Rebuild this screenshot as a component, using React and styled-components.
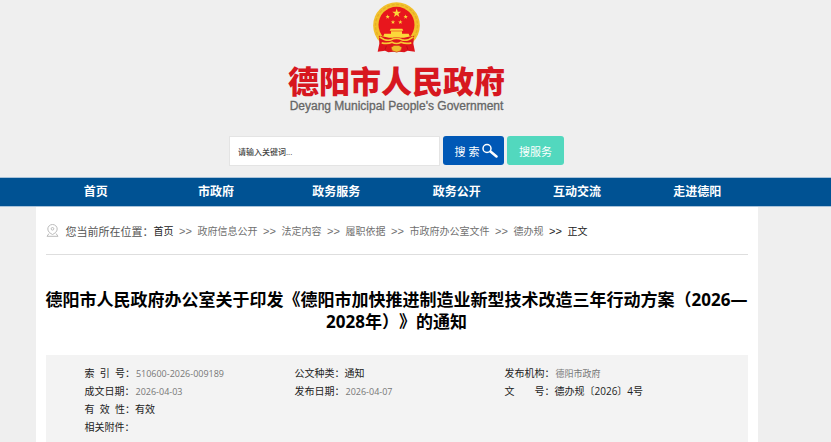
import React from "react";
import styled, { createGlobalStyle } from "styled-components";

const GlobalStyle = createGlobalStyle`
  * {
    box-sizing: border-box;
  }

  body {
    margin: 0;
    background: #efefef;
    color: #333;
    font-family: "Open Sans", "Noto Sans CJK SC", sans-serif;
    font-size: 10px;
    text-spacing-trim: space-all;
  }

  a {
    color: inherit;
    text-decoration: none;
  }
`;

const Page = styled.div`
  min-height: 100vh;
  display: flex;
  flex-direction: column;
`;

const Band = styled.div`
  padding: 0 38px 0 0;
`;

const Container = styled.div`
  max-width: 722px;
  margin: 0 auto;
`;

const Header = styled(Container)`
  display: flex;
  flex-direction: column;
  align-items: center;
  padding: 2px 0 11px;
`;

const Brand = styled.a`
  display: flex;
  flex-direction: column;
  align-items: center;
`;

const SiteName = styled.span`
  margin-top: 14px;
  color: #d7171f;
  font-family: "Liberation Sans", "Noto Sans CJK SC", sans-serif;
  font-size: 31px;
  font-weight: 900;
  line-height: 32px;
`;

const SiteNameEn = styled.span`
  color: #666;
  font-family: "Liberation Sans", sans-serif;
  font-size: 12px;
  font-weight: 400;
  -webkit-text-stroke: 0.3px #666;
  line-height: 14px;
`;

const SearchForm = styled.form`
  display: flex;
  gap: 3px;
  margin-top: 23px;
`;

const SearchInput = styled.input`
  width: 211px;
  height: 30px;
  padding: 0 8px;
  border: 1px solid #e4e4e4;
  background: #fff;
  color: #555;
  font: 500 8px "Open Sans", "Noto Sans CJK SC", sans-serif;

  &::placeholder {
    color: #444;
    opacity: 1;
  }
`;

const SearchButton = styled.button`
  display: flex;
  align-items: center;
  justify-content: center;
  gap: 3px;
  width: ${(props) => (props.$wide ? 61 : 57)}px;
  height: 29px;
  padding: ${(props) => (props.$wide ? "0 0 0 6px" : 0)};
  border: 0;
  border-radius: 3px;
  background: ${(props) => (props.$wide ? "#0058b6" : "#52d8be")};
  color: #fff;
  font: 11px "Open Sans", "Noto Sans CJK SC", sans-serif;
  cursor: pointer;
`;

const NavBand = styled(Band)`
  border: solid #a9c3da;
  border-width: 1px 0;
  background: #005293;
`;

const Nav = styled(Container).attrs({ as: "nav" })`
  display: grid;
  grid-template-columns: repeat(6, 1fr);
`;

const NavLink = styled.a`
  color: #fff;
  font-size: 12px;
  font-weight: 700;
  line-height: 28px;
  text-align: center;
`;

const MainBand = styled(Band)`
  flex: 1;
  display: flex;
  flex-direction: column;
`;

const Main = styled(Container).attrs({ as: "main" })`
  flex: 1;
  width: 100%;
  padding: 0 10px;
  background: #fff;
`;

const Breadcrumb = styled.nav`
  display: flex;
  align-items: center;
  height: 48px;
  border-bottom: 1px solid #dedede;
  color: #666;
`;

const BreadcrumbLabel = styled.span`
  margin-left: 7px;
  color: #555;
  font-size: 11px;
`;

const Crumb = styled.a`
  color: ${(props) => (props.$dark ? "#222" : "#707070")};
`;

const Separator = styled.span`
  width: 24px;
  color: ${(props) => (props.$dark ? "#222" : "#707070")};
  font-family: "Liberation Sans", sans-serif;
  font-size: 11px;
  text-align: center;
`;

const Title = styled.h1`
  margin: 34px 0 22px;
  color: #000;
  font-size: 17px;
  font-weight: 700;
  line-height: 22px;
  text-align: center;
`;

const InfoPanel = styled.div`
  padding: 9px 33px 12px 39px;
  background: #f3f3f3;
`;

const InfoTable = styled.table`
  width: 100%;
  border-collapse: collapse;
  table-layout: fixed;
`;

const InfoCell = styled.td`
  height: 18px;
  padding: 0;
  color: #222;
  line-height: 18px;
  white-space: nowrap;
`;

const InfoValue = styled.span`
  margin-left: ${(props) => (props.$muted ? 1 : 0)}px;
  color: ${(props) => (props.$muted ? "#777" : "#222")};
  font-size: ${(props) => (props.$muted ? 9 : 10)}px;
  line-height: 1;
`;

const navItems = [
  "首页",
  "市政府",
  "政务服务",
  "政务公开",
  "互动交流",
  "走进德阳",
];

const crumbs = [
  "首页",
  "政府信息公开",
  "法定内容",
  "履职依据",
  "市政府办公室文件",
  "德办规",
  "正文",
];

const infoRows = [
  [
    {
      label: "索\u00a0\u00a0引\u00a0\u00a0号：",
      value: "510600-2026-009189",
      muted: true,
    },
    { label: "公文种类：", value: "通知" },
    { label: "发布机构：", value: "德阳市政府", muted: true },
  ],
  [
    { label: "成文日期：", value: "2026-04-03", muted: true },
    { label: "发布日期：", value: "2026-04-07", muted: true },
    { label: "文\u3000\u3000号：", value: "德办规〔2026〕4号" },
  ],
  [{ label: "有\u00a0\u00a0效\u00a0\u00a0性：", value: "有效" }],
  [{ label: "相关附件：", value: "" }],
];

const STAR =
  "M0-10 2.3-3.1 9.5-3.1 3.7 1.2 5.9 8.1 0 3.8-5.9 8.1-3.7 1.2-9.5-3.1-2.3-3.1z";

const Emblem = () => (
  <svg width="47" height="51" viewBox="0 0 141 152" aria-hidden="true">
    <circle cx="70.5" cy="70" r="70" fill="#f2c12c" />
    <circle
      cx="70.5"
      cy="70"
      r="63"
      fill="none"
      stroke="#e6ae27"
      strokeWidth="4"
      strokeDasharray="9 5"
    />
    <circle cx="70.5" cy="68" r="54" fill="#e8161d" />
    <g fill="#fbd83a">
      <path d={STAR} transform="translate(71 33) scale(1.4)" />
      <path d={STAR} transform="translate(44 44) scale(.7)" />
      <path d={STAR} transform="translate(98 44) scale(.7)" />
      <path d={STAR} transform="translate(60 60) scale(.7)" />
      <path d={STAR} transform="translate(82 60) scale(.7)" />
      <path d="M53 80h35l3 6H50zM54 87h33v8H54zM34 95h73l5 12H29z" />
    </g>
    <path
      d="M18 101q22 3 35 8 17-6 35 0 13-5 35-8l-2 24 5 24-22-3-10 4-24-2-24 2-10-4-22 3 5-24z"
      fill="#dd141c"
    />
    <path
      d="M20 104q18 14 34 9 16-8 33 0 16 5 34-9M26 122q18 4 31-2 14 8 27 0 15 6 31 2"
      fill="none"
      stroke="#f7c832"
      strokeWidth="5"
    />
    <path
      d="m54 136 9-6h15l9 6-4 10-12 4-13-4z"
      fill="#eebb2d"
      stroke="#cf3b1d"
      strokeWidth="2"
    />
    <path d="M40 131 36 143M101 131l4 12" stroke="#a90c13" strokeWidth="2" />
  </svg>
);

const SearchIcon = () => (
  <svg width="16" height="15" viewBox="0 0 16 15" aria-hidden="true">
    <circle
      cx="5"
      cy="5.5"
      r="4"
      fill="none"
      stroke="#fff"
      strokeWidth="1.5"
    />
    <path
      d="m8.5 8.5 6 5"
      stroke="#fff"
      strokeWidth="2.5"
      strokeLinecap="round"
    />
  </svg>
);

const PinIcon = () => (
  <svg
    width="13"
    height="13"
    viewBox="0 0 13 13"
    fill="none"
    stroke="#bbb"
    aria-hidden="true"
  >
    <path d="M6.5 10.5C4.5 9.5 1.8 7.8 1.8 5a4.7 4.5 0 0 1 9.4 0c0 2.8-2.7 4.5-4.7 5.5z" />
    <circle cx="6.5" cy="4.8" r="1.3" />
    <path d="M3 9.5 1 12.3h11L10 9.5" />
  </svg>
);

const App = () => {
  return (
    <>
      <GlobalStyle />
      <Page>
        <Band>
          <Header as="header">
            <Brand href="#">
              <Emblem />
              <SiteName>德阳市人民政府</SiteName>
              <SiteNameEn>Deyang Municipal People's Government</SiteNameEn>
            </Brand>
            <SearchForm onSubmit={(e) => e.preventDefault()}>
              <SearchInput
                type="text"
                aria-label="请输入关键词"
                placeholder="请输入关键词..."
              />
              <SearchButton type="submit" $wide>
                搜 索
                <SearchIcon />
              </SearchButton>
              <SearchButton type="button">搜服务</SearchButton>
            </SearchForm>
          </Header>
        </Band>
        <NavBand>
          <Nav>
            {navItems.map((item) => (
              <NavLink key={item} href="#">
                {item}
              </NavLink>
            ))}
          </Nav>
        </NavBand>
        <MainBand>
          <Main>
            <Breadcrumb>
              <PinIcon />
              <BreadcrumbLabel>您当前所在位置：</BreadcrumbLabel>
              {crumbs.map((item, idx) => {
                const last = idx === crumbs.length - 1;
                return (
                  <React.Fragment key={item}>
                    {idx > 0 && <Separator $dark={last}>&gt;&gt;</Separator>}
                    <Crumb href="#" $dark={idx === 0 || last}>
                      {item}
                    </Crumb>
                  </React.Fragment>
                );
              })}
            </Breadcrumb>
            <Title>
              德阳市人民政府办公室关于印发《德阳市加快推进制造业新型技术改造三年行动方案（2026—2028年）》的通知
            </Title>
            <InfoPanel>
              <InfoTable>
                <tbody>
                  {infoRows.map((row, idx) => (
                    <tr key={idx}>
                      {[0, 1, 2].map((col) => (
                        <InfoCell key={col}>
                          {row[col] && (
                            <>
                              {row[col].label}
                              <InfoValue $muted={row[col].muted}>
                                {row[col].value}
                              </InfoValue>
                            </>
                          )}
                        </InfoCell>
                      ))}
                    </tr>
                  ))}
                </tbody>
              </InfoTable>
            </InfoPanel>
          </Main>
        </MainBand>
      </Page>
    </>
  );
};

export default App;
